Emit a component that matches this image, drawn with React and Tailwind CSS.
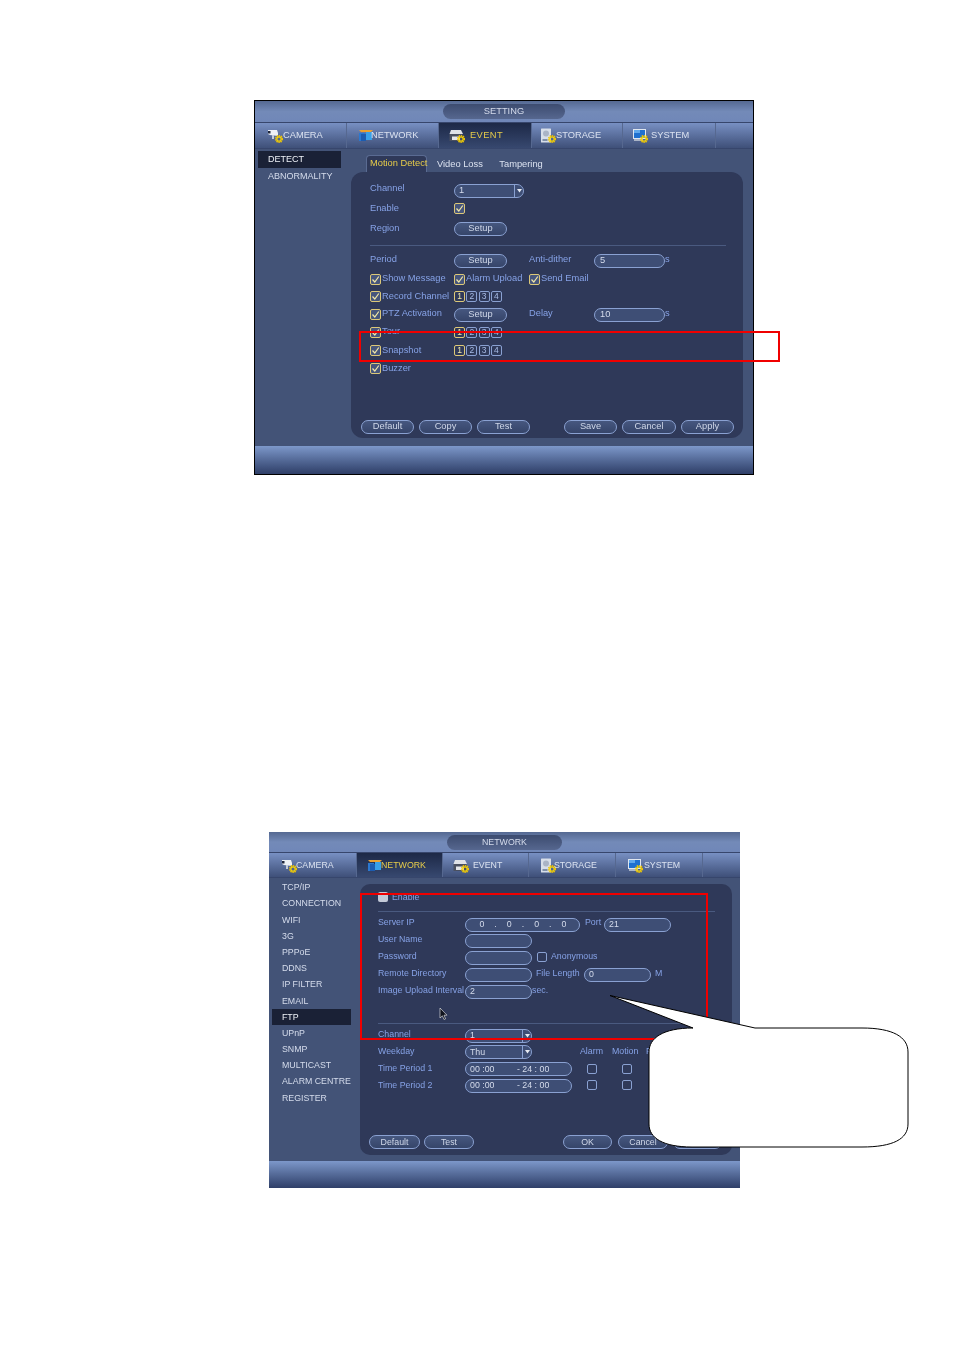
import React from "react";

const Gear = () => (
  <g>
    <circle cx="12" cy="11" r="3.4" fill="none" stroke="#f2c400" strokeWidth="1.4" strokeDasharray="1.4 0.8" />
    <circle cx="12" cy="11" r="2.2" fill="none" stroke="#f7d400" strokeWidth="1.3" />
  </g>
);

const icons = {
  camera: (
    <>
      <path d="M1 2 L10 2 L11 5 L11 8 L3 7 L1 6 Z" fill="#eef1f6" />
      <rect x="1" y="3" width="2.5" height="2.5" fill="#20283c" />
      <rect x="5" y="7" width="2" height="4" fill="#c4ccd8" />
    </>
  ),
  network: (
    <>
      <path d="M1 2 L15 2 L13 4 L3 4 Z" fill="#e8a030" />
      <rect x="1" y="5" width="6" height="8" fill="#2a78d0" />
      <rect x="8" y="4" width="6" height="8" fill="#38a0e8" />
      <rect x="3" y="6" width="5" height="7" fill="#1c5cb0" />
    </>
  ),
  event: (
    <>
      <path d="M2 2 L12 2 L14 6 L0.5 6 Z" fill="#dfe2e8" />
      <rect x="0.5" y="6" width="13" height="7" fill="#4a5060" />
      <rect x="3" y="8.5" width="8" height="3.5" fill="#e4e6ea" />
    </>
  ),
  storage: (
    <>
      <rect x="1" y="0.5" width="10" height="14" rx="0.5" fill="#d7dee9" />
      <circle cx="6" cy="5.5" r="3" fill="#aab4c6" />
      <rect x="2.5" y="11" width="5" height="2" fill="#8090a8" />
    </>
  ),
  system: (
    <>
      <rect x="1" y="1" width="13" height="10" fill="#dfe6f0" />
      <rect x="2" y="2" width="11" height="8" fill="#1f70d0" />
      <rect x="2" y="2" width="6" height="3" fill="#60a8ec" />
      <rect x="2" y="11" width="9" height="2" fill="#aab4c6" />
    </>
  ),
};

const TabIcon = ({ name }) => (
  <svg width="16" height="15" viewBox="0 0 16 15" className="shrink-0">
    {icons[name]}
    {name !== "network" && <Gear />}
  </svg>
);

const Tab = ({ icon, label, active, className, textClass }) => (
  <div
    className={
      "flex h-full shrink-0 items-center border-r border-[#566890] " +
      (active
        ? "bg-gradient-to-b from-[#1d2947] to-[#37486f] text-[#e6cc4a] "
        : "text-[#dbe2f0] ") +
      className
    }
  >
    <TabIcon name={icon} />
    <span className={textClass}>{label}</span>
  </div>
);

const Pill = ({ className, children }) => (
  <div
    className={
      "flex h-[14px] shrink-0 items-center rounded-full border border-[#8aa1d2] bg-[#3e4e75] text-[#d5dcec] " +
      className
    }
  >
    {children}
  </div>
);

const Btn = ({ className, children }) => (
  <div
    className={
      "flex h-[14px] shrink-0 items-center justify-center rounded-full border border-[#8aa1d2] bg-gradient-to-b from-[#46577f] to-[#36456a] text-[#cfd7e8] " +
      className
    }
  >
    {children}
  </div>
);

const Select = ({ className, value }) => (
  <Pill className={"overflow-hidden pl-[4px] " + className}>
    <span className="flex-1">{value}</span>
    <span className="flex h-full w-[9px] items-center justify-center border-l border-[#8aa1d2]">
      <svg width="5" height="4" viewBox="0 0 5 4">
        <path d="M0 0 H5 L2.5 3.5 Z" fill="#e6eaf2" />
      </svg>
    </span>
  </Pill>
);

const Check = ({ className }) => (
  <span className={"flex h-[11px] w-[11px] shrink-0 items-center justify-center rounded-[2px] border border-[#dcc878] bg-[#46557c] " + (className || "")}>
    <svg width="9" height="9" viewBox="0 0 9 9">
      <path d="M1.5 4.5 L3.8 7 L7.8 1.5" fill="none" stroke="#f2e8a8" strokeWidth="1.2" />
    </svg>
  </span>
);

const Box = ({ className }) => (
  <span className={"block h-[10px] w-[10px] shrink-0 rounded-[2px] border border-[#8aa1d2] " + className} />
);

const CheckLabel = ({ children, className }) => (
  <div className={"flex shrink-0 items-center gap-px text-[#86a2e6] " + className}>
    <Check />
    <span>{children}</span>
  </div>
);

const Numbers = () => (
  <div className="flex gap-[1.3px]">
    {[1, 2, 3, 4].map((n) => (
      <span
        key={n}
        className={
          "flex h-[11px] w-[11px] items-center justify-center rounded-[2px] border text-[8.5px] " +
          (n === 1 ? "border-[#dcc878] text-[#f2e8a8]" : "border-[#8aa1d2] text-[#a8bce6]")
        }
      >
        {n}
      </span>
    ))}
  </div>
);

const Chrome = ({ title, pillClass, tabs, children, className, titleClass, tabsClass, footClass }) => (
  <div className={"flex flex-col blur-[0.3px] " + className}>
    <div className={"flex shrink-0 items-center bg-gradient-to-b from-[#556992] via-[#738ab8] to-[#7087b8] " + titleClass}>
      <div className={"flex h-[15px] items-center justify-center rounded-full bg-gradient-to-b from-[#3d4c70] to-[#56678f] text-[#d5dcec] " + pillClass}>
        {title}
      </div>
    </div>
    <div className={"flex shrink-0 items-center border-y border-[#37466c] bg-gradient-to-b from-[#7890c3] to-[#3f5079] " + tabsClass}>
      {tabs}
    </div>
    <div className="flex min-h-0 flex-1 bg-[#435377]">{children}</div>
    <div className={"shrink-0 bg-gradient-to-b from-[#7d98ca] to-[#2f3f68] " + footClass} />
  </div>
);

const Side = ({ items, selected, itemClass, className }) => (
  <div className={"flex shrink-0 flex-col whitespace-nowrap text-[#d5dcec] " + className}>
    {items.map((t) => (
      <div
        key={t}
        className={
          "ml-[3px] flex items-center pl-[10px] " + itemClass +
          (t === selected ? " bg-[#1a2136] text-[#eef1f7]" : "")
        }
      >
        {t}
      </div>
    ))}
  </div>
);

const L = ({ className, children }) => (
  <span className={"shrink-0 text-[#86a2e6] " + (className || "")}>{children}</span>
);

const Row = ({ className, children }) => (
  <div className={"flex items-center " + className}>{children}</div>
);

const SettingWindow = () => (
  <Chrome
    className="ml-[254px] h-[375px] w-[500px] border border-black"
    titleClass="h-[21px]"
    tabsClass="h-[27px]"
    footClass="h-[28px]"
    title="SETTING"
    pillClass="ml-[188px] w-[122px]"
    tabs={
      <>
        <Tab icon="camera" label="CAMERA" className="w-[92px] pl-[12px]" textClass="ml-[0px]" />
        <Tab icon="network" label="NETWORK" className="w-[92px] pl-[11px]" textClass="-ml-[3px]" />
        <Tab icon="event" label="EVENT" active className="w-[93px] pl-[10px]" textClass="ml-[5px] tracking-[0.4px]" />
        <Tab icon="storage" label="STORAGE" className="w-[91px] pl-[8px]" textClass="ml-[0px]" />
        <Tab icon="system" label="SYSTEM" className="w-[93px] pl-[9px]" textClass="ml-[3px]" />
      </>
    }
  >
    <Side
      className="w-[96px] pt-[2px] text-[9px]"
      items={["DETECT", "ABNORMALITY"]}
      selected="DETECT"
      itemClass="h-[17px] w-[83px]"
    />
    <div className="flex flex-1 flex-col pr-[10px] pb-[8px]">
      <div className="flex h-[23px] shrink-0 items-end pl-[15px] text-[#dbe2f0]">
        <div className="flex h-[17px] w-[61px] items-center rounded-t-[4px] border-x border-t border-[#5a6b92] bg-[#2f3959] pl-[3px] whitespace-nowrap text-[#e6cc4a]">
          Motion Detect
        </div>
        <span className="mb-[3px] ml-[10px]">Video Loss</span>
        <span className="mb-[3px] ml-[16.5px]">Tampering</span>
      </div>
      <div className="flex flex-1 flex-col rounded-[12px] bg-[#2f3959] pt-[7px] pl-[19px]">
        <Row className="h-[20px]"><L className="w-[84px]">Channel</L><Select className="mt-[3px] w-[70px]" value="1" /></Row>
        <Row className="h-[20px]"><L className="w-[84px]">Enable</L><Check className="mb-[2px]" /></Row>
        <Row className="h-[20px]"><L className="w-[84px]">Region</L><Btn className="w-[53px]">Setup</Btn></Row>
        <div className="mt-[6px] mb-[4px] mr-[17px] h-px shrink-0 bg-[#4a5a80]" />
        <Row className="h-[20px]">
          <L className="w-[84px]">Period</L>
          <Btn className="mt-[2px] w-[53px]">Setup</Btn>
          <L className="ml-[22px] w-[65px]">Anti-dither</L>
          <Pill className="mt-[2px] w-[71px] pl-[5px]">5</Pill>
          <L>s</L>
        </Row>
        <Row className="h-[18px]">
          <CheckLabel className="w-[84px]">Show Message</CheckLabel>
          <CheckLabel className="w-[75px]">Alarm Upload</CheckLabel>
          <CheckLabel>Send Email</CheckLabel>
        </Row>
        <Row className="h-[17px]"><CheckLabel className="w-[84px]">Record Channel</CheckLabel><Numbers /></Row>
        <Row className="h-[18px]">
          <CheckLabel className="w-[84px]">PTZ Activation</CheckLabel>
          <Btn className="mt-[2px] w-[53px]">Setup</Btn>
          <L className="ml-[22px] w-[65px]">Delay</L>
          <Pill className="mt-[2px] w-[71px] pl-[5px]">10</Pill>
          <L>s</L>
        </Row>
        <Row className="h-[18px]"><CheckLabel className="w-[84px]">Tour</CheckLabel><Numbers /></Row>
        <Row className="h-[19px]"><CheckLabel className="w-[84px]">Snapshot</CheckLabel><Numbers /></Row>
        <Row className="h-[17px]"><CheckLabel className="w-[84px]">Buzzer</CheckLabel></Row>
        <div className="mt-auto mb-[4px] -ml-[9px] flex pr-[9px]">
          <Btn className="w-[53px]">Default</Btn>
          <Btn className="ml-[5px] w-[53px]">Copy</Btn>
          <Btn className="ml-[5px] w-[53px]">Test</Btn>
          <Btn className="ml-auto w-[53px]">Save</Btn>
          <Btn className="ml-[5px] w-[54px]">Cancel</Btn>
          <Btn className="ml-[5px] w-[53px]">Apply</Btn>
        </div>
      </div>
    </div>
  </Chrome>
);

const IpField = () => (
  <Pill className="mt-[4px] w-[115px] pl-[9px]">
    {["0", ".", "0", ".", "0", ".", "0"].map((c, i) => (
      <span key={i} className="w-[13.7px] text-center">{c}</span>
    ))}
  </Pill>
);

const TimeField = () => (
  <Pill className="mt-[1px] w-[107px] pl-[4px]">
    <span className="w-[47px]">00 :00</span>
    <span>- 24 : 00</span>
  </Pill>
);

const NetworkWindow = () => (
  <Chrome
    className="mt-[357px] ml-[269px] h-[356px] w-[471px] text-[8.8px]"
    titleClass="h-[20px]"
    tabsClass="h-[26px]"
    footClass="h-[27px]"
    title="NETWORK"
    pillClass="ml-[178px] w-[115px]"
    tabs={
      <>
        <Tab icon="camera" label="CAMERA" className="w-[88px] pl-[12px]" textClass="-ml-[1px]" />
        <Tab icon="network" label="NETWORK" active className="w-[86px] pl-[10px]" textClass="-ml-[2px]" />
        <Tab icon="event" label="EVENT" className="w-[86px] pl-[10px]" textClass="ml-[4px]" />
        <Tab icon="storage" label="STORAGE" className="w-[87px] pl-[11px]" textClass="-ml-[2px]" />
        <Tab icon="system" label="SYSTEM" className="w-[87px] pl-[11px]" textClass="ml-[1px]" />
      </>
    }
  >
    <Side
      className="w-[91px] pt-[1.5px]"
      items={["TCP/IP", "CONNECTION", "WIFI", "3G", "PPPoE", "DDNS", "IP FILTER", "EMAIL", "FTP", "UPnP", "SNMP", "MULTICAST", "ALARM CENTRE", "REGISTER"]}
      selected="FTP"
      itemClass="h-[16.2px] w-[79px]"
    />
    <div className="flex flex-1 flex-col pt-[6px] pr-[8px] pb-[6px]">
      <div className="flex flex-1 flex-col rounded-[10px] bg-[#2f3959] pt-[5px] pl-[18px]">
        <Row className="h-[16px] gap-[4px]">
          <span className="block h-[10px] w-[10px] rounded-[2px] bg-[#c4cad8]" />
          <L>Enable</L>
        </Row>
        <div className="mt-[6px] mb-[2px] mr-[17px] h-px shrink-0 bg-[#4a5a80]" />
        <Row className="h-[17px]">
          <L className="w-[87px]">Server IP</L>
          <IpField />
          <L className="ml-[5px] w-[19px]">Port</L>
          <Pill className="mt-[4px] w-[67px] pl-[4px]">21</Pill>
        </Row>
        <Row className="h-[17px]"><L className="w-[87px]">User Name</L><Pill className="mt-[2px] w-[67px]" /></Row>
        <Row className="h-[17px]">
          <L className="w-[87px]">Password</L>
          <Pill className="mt-[2px] w-[67px]" />
          <Box className="ml-[5px]" />
          <L className="ml-[4px]">Anonymous</L>
        </Row>
        <Row className="h-[17px]">
          <L className="w-[87px]">Remote Directory</L>
          <Pill className="mt-[2px] w-[67px]" />
          <L className="ml-[4px] w-[48px]">File Length</L>
          <Pill className="mt-[2px] w-[67px] pl-[4px]">0</Pill>
          <L className="ml-[4px]">M</L>
        </Row>
        <Row className="h-[17px]">
          <L className="w-[87px] whitespace-nowrap">Image Upload Interval</L>
          <Pill className="mt-[2px] w-[67px] pl-[4px]">2</Pill>
          <L>sec.</L>
        </Row>
        <div className="mt-[24px] mb-[2px] mr-[17px] h-px shrink-0 bg-[#4a5a80]" />
        <Row className="h-[17px]"><L className="w-[87px]">Channel</L><Select className="mt-[2px] w-[67px]" value="1" /></Row>
        <Row className="h-[17px]">
          <L className="w-[87px]">Weekday</L>
          <Select className="mt-[1px] w-[67px]" value="Thu" />
          <L className="ml-[48px] w-[23px]">Alarm</L>
          <L className="ml-[9px] w-[27px]">Motion</L>
          <L className="ml-[7px]">FTP</L>
        </Row>
        <Row className="h-[17px]">
          <L className="w-[87px]">Time Period 1</L>
          <TimeField />
          <Box className="ml-[15px]" />
          <Box className="ml-[25px]" />
        </Row>
        <Row className="h-[16px]">
          <L className="w-[87px]">Time Period 2</L>
          <TimeField />
          <Box className="ml-[15px]" />
          <Box className="ml-[25px]" />
        </Row>
        <div className="mt-auto mb-[6px] -ml-[9px] flex pr-[10px]">
          <Btn className="w-[51px]">Default</Btn>
          <Btn className="ml-[4px] w-[50px]">Test</Btn>
          <Btn className="ml-[89px] w-[49px]">OK</Btn>
          <Btn className="ml-[6px] w-[50px]">Cancel</Btn>
          <Btn className="ml-[5px] w-[49px]">Apply</Btn>
        </div>
      </div>
    </div>
  </Chrome>
);

export default function App() {
  return (
    <div className="relative h-[1350px] w-[954px] overflow-hidden bg-white pt-[100px] font-['Liberation_Sans',Arial,sans-serif] text-[9.3px] leading-none">
      <SettingWindow />
      <NetworkWindow />

      {/* annotation marks drawn over the screenshots */}
      <div className="absolute top-[331px] left-[359px] h-[31px] w-[421px] border-2 border-[#f00000]" />
      <div className="absolute top-[893px] left-[360px] h-[147px] w-[348px] border-2 border-[#f00000]" />

      <svg className="absolute top-[1007px] left-[439px]" width="9" height="14" viewBox="0 0 9 14">
        <path d="M1 1 V11 L3.4 8.8 L5 12.5 L6.6 11.8 L5 8.2 H8 Z" fill="#10131c" stroke="#f2f2f2" strokeWidth="0.6" />
      </svg>

      <svg className="absolute top-[990px] left-[605px]" width="310" height="165" viewBox="605 990 310 165">
        <path
          d="M693 1028 L610 995.5 L755 1028 L862 1028 C893 1028 908 1037 908 1052 L908 1124 C908 1139 893 1147 862 1147 L692 1147 C663 1147 649 1138 649 1124 L649 1052 C649 1038 663 1028 693 1028 Z"
          fill="#ffffff"
          stroke="#000000"
          strokeWidth="1"
        />
      </svg>
    </div>
  );
}
